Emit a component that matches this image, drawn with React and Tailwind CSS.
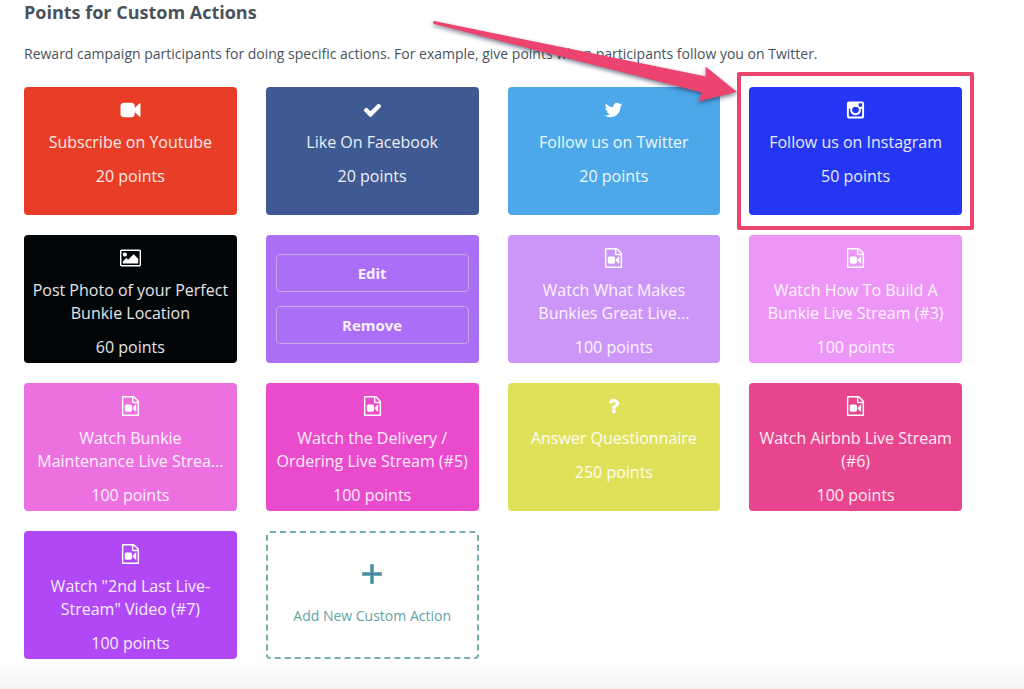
const ICONS = {
  video: {
    viewBox: "0 0 1792 1792",
    d: "M1792 352v1088q0 42-39 59-13 5-25 5-27 0-45-19l-403-403v166q0 119-84.5 203.5t-203.5 84.5h-704q-119 0-203.5-84.5t-84.5-203.5v-704q0-119 84.5-203.5t203.5-84.5h704q119 0 203.5 84.5t84.5 203.5v165l403-402q18-19 45-19 12 0 25 5 39 17 39 59z",
  },
  check: {
    viewBox: "0 0 1792 1792",
    d: "M1671 566q0 40-28 68l-724 724-136 136q-28 28-68 28t-68-28l-136-136-362-362q-28-28-28-68t28-68l136-136q28-28 68-28t68 28l294 295 656-657q28-28 68-28t68 28l136 136q28 28 28 68z",
  },
  twitter: {
    viewBox: "0 0 1792 1792",
    d: "M1684 408q-67 98-162 167 1 14 1 42 0 130-38 259.5t-115.5 248.5-184.5 210.5-258 146-323 54.5q-271 0-496-145 35 4 78 4 225 0 401-138-105-2-188-64.5t-114-159.5q33 5 61 5 43 0 85-11-112-23-185.5-111.5t-73.5-205.5v-4q68 38 146 41-66-44-105-115t-39-154q0-88 44-163 121 149 294.5 238.5t371.5 99.5q-8-38-8-74 0-134 94.5-228.5t228.5-94.5q140 0 236 102 109-21 205-78-37 115-142 178 93-10 186-50z",
  },
  instagram: {
    viewBox: "0 0 1792 1792",
    d: "M1490 1426v-648h-135q20 63 20 131 0 126-64 232.5t-174 168.5-240 62q-197 0-337-135.5t-140-327.5q0-68 20-131h-141v648q0 26 17.5 43.5t43.5 17.5h1069q25 0 43-17.5t18-43.5zm-284-533q0-124-90.5-211.5t-218.5-87.5q-127 0-217.5 87.5t-90.5 211.5 90.5 211.5 217.5 87.5q128 0 218.5-87.5t90.5-211.5zm284-360v-165q0-28-20-48.5t-49-20.5h-174q-29 0-49 20.5t-20 48.5v165q0 29 20 49t49 20h174q29 0 49-20t20-49zm174-208v1142q0 81-58 139t-139 58h-1142q-81 0-139-58t-58-139v-1142q0-81 58-139t139-58h1142q81 0 139 58t58 139z",
  },
  image: {
    viewBox: "-64 0 1920 1792",
    d: "M576 576q0 80-56 136t-136 56-136-56-56-136 56-136 136-56 136 56 56 136zm1024 384v448h-1408v-192l320-320 160 160 512-512zm96-704h-1600q-13 0-22.5 9.5t-9.5 22.5v1216q0 13 9.5 22.5t22.5 9.5h1600q13 0 22.5-9.5t9.5-22.5v-1216q0-13-9.5-22.5t-22.5-9.5zm160 32v1216q0 66-47 113t-113 47h-1600q-66 0-113-47t-47-113v-1216q0-66 47-113t113-47h1600q66 0 113 47t47 113z",
  },
  fileVideo: {
    viewBox: "0 0 1792 1792",
    d: "M1596 380q28 28 48 76t20 88v1152q0 40-28 68t-68 28h-1344q-40 0-68-28t-28-68v-1600q0-40 28-68t68-28h896q40 0 88 20t76 48zm-444-244v376h376q-10-29-22-41l-313-313q-12-12-41-22zm384 1528v-1024h-416q-40 0-68-28t-28-68v-416h-768v1536h1280zm-640-896q52 0 90 38t38 90v384q0 52-38 90t-90 38h-384q-52 0-90-38t-38-90v-384q0-52 38-90t90-38h384zm492 2q20 8 20 30v576q0 22-20 30-8 2-12 2-14 0-23-9l-265-266v-90l265-266q9-9 23-9 4 0 12 2z",
  },
  question: {
    viewBox: "0 0 1792 1792",
    d: "M1088 1256v240q0 16-12 28t-28 12h-240q-16 0-28-12t-12-28v-240q0-16 12-28t28-12h240q16 0 28 12t12 28zm316-600q0 54-15.5 101t-35 76.5-55 59.5-57.5 43.5-61 35.5q-41 23-68.5 65t-27.5 67q0 17-12 32.5t-28 15.5h-240q-15 0-25.5-18.5t-10.5-37.5v-45q0-83 65-156.5t143-108.5q59-27 84-56t25-76q0-42-46.5-74t-107.5-32q-65 0-108 29-35 25-107 115-13 16-31 16-12 0-25-8l-164-125q-13-10-15.5-25t5.5-28q160-266 464-266 80 0 161 31t146 83 106 127.5 41 158.5z",
  },
};

const ACTIONS = [
  { icon: "video", title: "Subscribe on Youtube", points: 20, color: "bg-[#e83d27]" },
  { icon: "check", title: "Like On Facebook", points: 20, color: "bg-[#3f5a93]" },
  { icon: "twitter", title: "Follow us on Twitter", points: 20, color: "bg-[#4ca8e8]" },
  { icon: "instagram", title: "Follow us on Instagram", points: 50, color: "bg-[#2435f3]", highlighted: true },
  { icon: "image", title: "Post Photo of your Perfect Bunkie Location", points: 60, color: "bg-[#020508]" },
  { editing: true, title: "Selected action" },
  { icon: "fileVideo", title: "Watch What Makes Bunkies Great Live...", points: 100, color: "bg-[#cc96f9]" },
  { icon: "fileVideo", title: "Watch How To Build A Bunkie Live Stream (#3)", points: 100, color: "bg-[#ee96f8]" },
  { icon: "fileVideo", title: "Watch Bunkie Maintenance Live Strea...", points: 100, color: "bg-[#ec70e0]" },
  { icon: "fileVideo", title: "Watch the Delivery / Ordering Live Stream (#5)", points: 100, color: "bg-[#ea4bcd]" },
  { icon: "question", title: "Answer Questionnaire", points: 250, color: "bg-[#dfe15b]" },
  { icon: "fileVideo", title: "Watch Airbnb Live Stream (#6)", points: 100, color: "bg-[#e8458f]" },
  { icon: "fileVideo", title: 'Watch "2nd Last Live-Stream" Video (#7)', points: 100, color: "bg-[#b048f6]" },
];

function Icon({ name }) {
  const { viewBox, d } = ICONS[name];
  return (
    <svg aria-hidden="true" viewBox={viewBox} className="h-5 w-[21px] fill-white">
      <path d={d} />
    </svg>
  );
}

function Highlight() {
  return (
    <>
      <div className="pointer-events-none absolute -inset-x-3 -inset-y-[15px] z-10 rounded-[2px] border-4 border-[#ec446f]" />
      <svg
        aria-hidden="true"
        viewBox="0 0 310 100"
        className="pointer-events-none absolute right-full -top-[72px] z-10 mr-3 h-[100px] w-[310px] overflow-visible fill-[#ec446f] drop-shadow-[0_2px_2px_rgba(30,40,70,0.6)]"
      >
        <path d="M7 6Q5 7 7 9L275 77.5L271 86.5L310 77L278.5 51.5L279 61.5Z" />
      </svg>
    </>
  );
}

function ActionCard({ action }) {
  return (
    <li className={`relative flex flex-col items-center rounded-[4px] px-2 pt-[13px] text-center text-base leading-[23px] text-white/90 ${action.color}`}>
      <Icon name={action.icon} />
      <h2 className="mt-[11px]">{action.title}</h2>
      <p className="mt-[11px]">{action.points} points</p>
      {action.highlighted && <Highlight />}
    </li>
  );
}

function EditingCard() {
  const button = "flex-1 rounded-[4px] border border-[#c9a8e6] text-[15px] font-bold text-white/90";
  return (
    <li className="flex flex-col gap-[14px] rounded-[4px] bg-[#ab6ef7] px-[10px] py-[19px]">
      <button type="button" className={button}>Edit</button>
      <button type="button" className={button}>Remove</button>
    </li>
  );
}

export default function App() {
  return (
    <main className="flex min-h-screen flex-col bg-white font-['Open_Sans',sans-serif]">
      <header className="px-6 text-[#4a525c]">
        <h1 className="text-lg leading-6 font-bold">Points for Custom Actions</h1>
        <p className="mt-[18px] text-sm leading-6">
          Reward campaign participants for doing specific actions. For example, give points when participants follow you on Twitter.
        </p>
      </header>
      <ul className="mt-[21px] mr-[62px] ml-6 grid auto-rows-[128px] grid-cols-4 gap-x-[29px] gap-y-5">
        {ACTIONS.map((action) =>
          action.editing ? <EditingCard key={action.title} /> : <ActionCard key={action.title} action={action} />
        )}
        <li className="flex">
          <button
            type="button"
            className="flex flex-1 flex-col items-center rounded-[4px] border-2 border-dashed border-[#75b0b0] pt-[31px] text-sm leading-6 text-[#5fa5a5]"
          >
            <svg aria-hidden="true" viewBox="0 0 20 20" className="h-5 w-5">
              <path d="M8 0h4v8h8v4h-8v8H8v-8H0V8h8z" fill="#6fb0b2" />
              <path d="M10 1v18M1 10h18" stroke="#4479a0" strokeWidth="1.5" />
            </svg>
            <span className="mt-5">Add New Custom Action</span>
          </button>
        </li>
      </ul>
      <div className="min-h-[30px] flex-1 bg-linear-to-b from-white to-[#f3f4f6]" />
    </main>
  );
}
